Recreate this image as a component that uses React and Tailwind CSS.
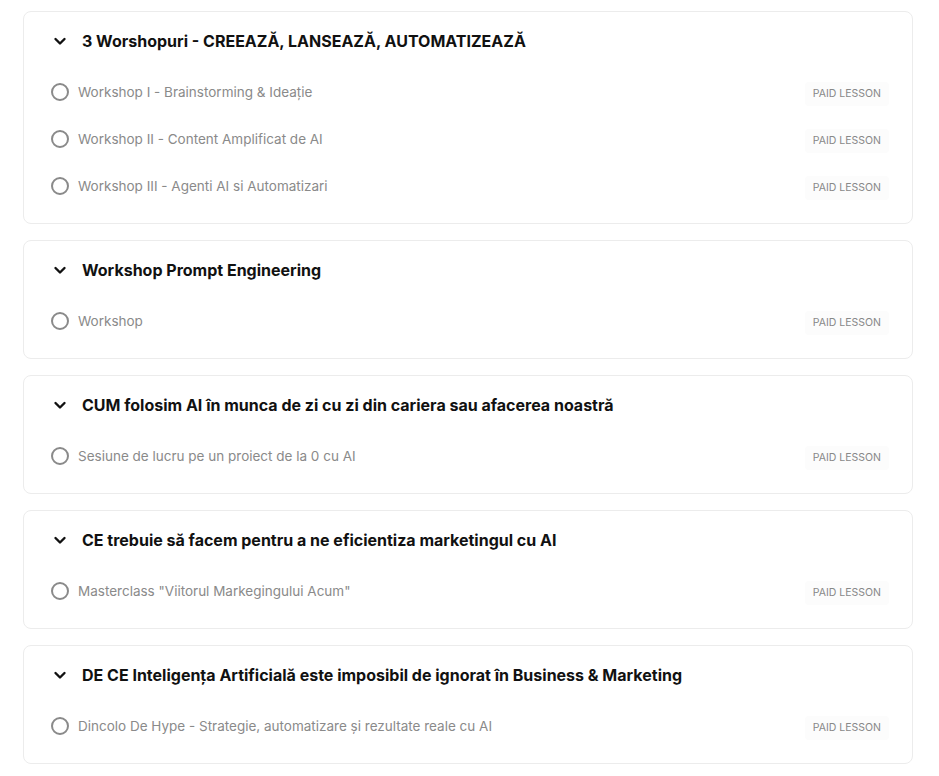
import React from "react";

const sections = [
  {
    title: "3 Worshopuri - CREEAZĂ, LANSEAZĂ, AUTOMATIZEAZĂ",
    lessons: [
      "Workshop I - Brainstorming & Ideație",
      "Workshop II - Content Amplificat de AI",
      "Workshop III - Agenti AI si Automatizari",
    ],
  },
  { title: "Workshop Prompt Engineering", lessons: ["Workshop"] },
  {
    title: "CUM folosim AI în munca de zi cu zi din cariera sau afacerea noastră",
    lessons: ["Sesiune de lucru pe un proiect de la 0 cu AI"],
  },
  {
    title: "CE trebuie să facem pentru a ne eficientiza marketingul cu AI",
    lessons: ['Masterclass "Viitorul Markegingului Acum"'],
  },
  {
    title: "DE CE Inteligența Artificială este imposibil de ignorat în Business & Marketing",
    lessons: ["Dincolo De Hype - Strategie, automatizare și rezultate reale cu AI"],
  },
];

function Chevron() {
  return (
    <svg width="14" height="14" viewBox="0 0 14 14" fill="none">
      <path d="M2.5 5 L7 9.5 L11.5 5" stroke="#111" strokeWidth="2.4" strokeLinecap="round" strokeLinejoin="round" />
    </svg>
  );
}

export default function App() {
  return (
    <div className="bg-white w-[939px] min-h-[776px] pt-[11px] flex flex-col gap-[16px]" style={{ fontFamily: "Inter, 'Noto Sans', sans-serif" }}>
      {sections.map((s, i) => (
        <div key={i} className="ml-[23px] w-[890px] border border-[#ececec] rounded-lg bg-white pt-[17px] pb-[14px]">
          <div className="flex items-center h-6 pl-[29px]">
            <Chevron />
            <span className="ml-[15px] text-[16px] font-bold text-[#111] leading-6">{s.title}</span>
          </div>
          <div className="mt-[15px]">
            {s.lessons.map((l, j) => (
              <div key={j} className="flex items-center h-[47px] pl-[27px] pr-[23px]">
                <div className="w-[18px] h-[18px] rounded-full border-2 border-[#8a8a8a] shrink-0" />
                <span className="ml-[9px] text-[13.5px] text-[#8a8a8a] leading-5">{l}</span>
                <span className="ml-auto mt-[4px] px-2 py-1 rounded bg-[#fcfcfc] text-[10.5px] text-[#888] leading-4">PAID LESSON</span>
              </div>
            ))}
          </div>
        </div>
      ))}
    </div>
  );
}
